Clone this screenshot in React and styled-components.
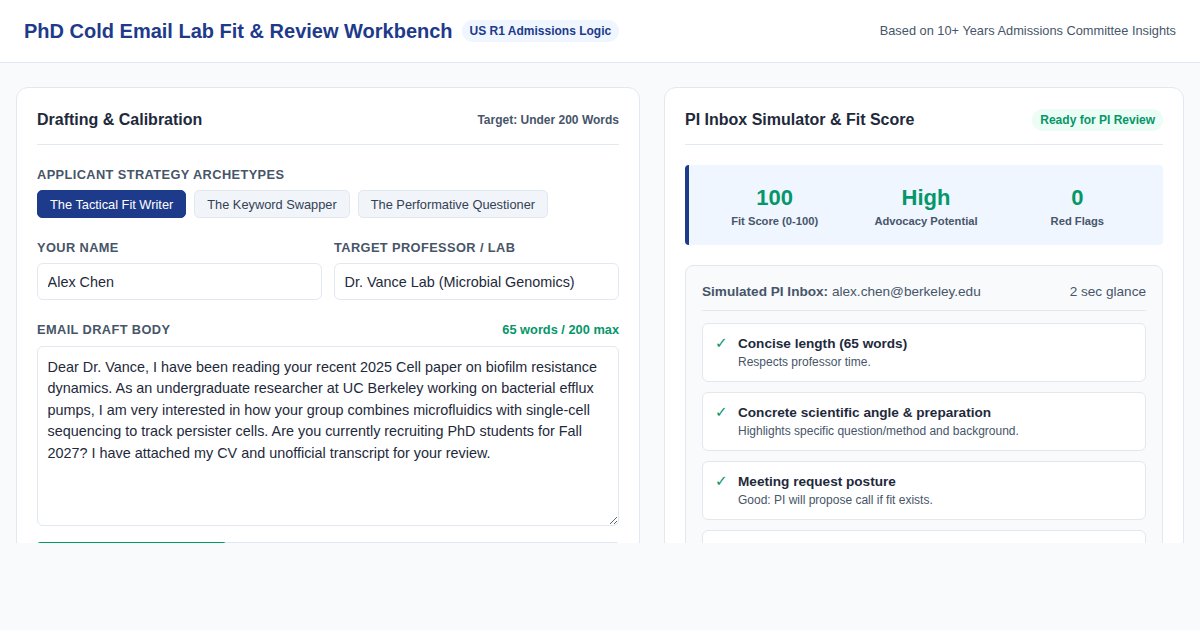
import React from "react";
import styled, { createGlobalStyle } from "styled-components";

const Global = createGlobalStyle`
  * { box-sizing: border-box; }
  html, body { margin: 0; padding: 0; }
  body {
    background: #f8fafc;
    font-family: "Liberation Sans", Arial, sans-serif;
    color: #1e293b;
    line-height: 1.5;
  }
`;

const Header = styled.header`
  height: 63px;
  background: #ffffff;
  border-bottom: 1px solid #e2e8f0;
  padding: 0 24px;
  display: flex;
  align-items: center;
  justify-content: space-between;
`;

const Brand = styled.div`
  display: flex;
  align-items: center;
  gap: 9px;
`;

const Title = styled.h1`
  margin: 0;
  font-size: 20px;
  font-weight: 700;
  color: #1e3a8a;
`;

const Pill = styled.span`
  display: inline-flex;
  align-items: center;
  height: 22px;
  padding: 0 ${(p) => p.$px || 8}px;
  border-radius: 11px;
  font-size: 12px;
  font-weight: 700;
  background: ${(p) => (p.$tone === "green" ? "#ecfdf5" : "#eff6ff")};
  color: ${(p) => (p.$tone === "green" ? "#059669" : "#1e3a8a")};
`;

const Tagline = styled.div`
  font-size: 12.8px;
  color: #475569;
`;

const Main = styled.main`
  height: 480px;
  overflow: hidden;
  padding: 24px 16px;
  display: grid;
  grid-template-columns: 1.2fr 1fr;
  gap: 24px;
  align-items: start;
`;

const Panel = styled.section`
  background: #ffffff;
  border: 1px solid #e2e8f0;
  border-radius: 12px;
  padding: 20px;
`;

const PanelHead = styled.div`
  display: flex;
  align-items: center;
  justify-content: space-between;
  height: 37px;
  padding-bottom: 12px;
  border-bottom: 1px solid #e2e8f0;
  margin-bottom: 20px;
`;

const PanelTitle = styled.h2`
  margin: 0;
  font-size: 16px;
  font-weight: 700;
  color: #1e293b;
  line-height: 24px;
`;

const Meta = styled.span`
  font-size: 12px;
  font-weight: 700;
  color: #475569;
`;

const Section = styled.div`
  margin-bottom: 20px;
`;

const LabelRow = styled.div`
  display: flex;
  justify-content: space-between;
  align-items: center;
  margin-bottom: 6px;
  height: 19.2px;
`;

const Label = styled.label`
  display: block;
  font-size: 12.8px;
  font-weight: 700;
  letter-spacing: 0.4px;
  text-transform: uppercase;
  color: #475569;
  line-height: 19.2px;
`;

const Count = styled.span`
  font-size: 12.8px;
  font-weight: 700;
  color: #059669;
`;

const ButtonRow = styled.div`
  display: flex;
  gap: 8px;
`;

const ArchButton = styled.button`
  height: 28px;
  padding: 0 12px;
  border-radius: 5px;
  font-family: "Liberation Sans", Arial, sans-serif;
  font-size: 12.8px;
  cursor: pointer;
  border: 1px solid ${(p) => (p.$active ? "#1e3a8a" : "#e2e8f0")};
  background: ${(p) => (p.$active ? "#1e3a8a" : "#f1f5f9")};
  color: ${(p) => (p.$active ? "#ffffff" : "#334155")};
`;

const Grid2 = styled.div`
  display: grid;
  grid-template-columns: 1fr 1fr;
  gap: 12px;
  margin-bottom: 20px;
`;

const Input = styled.input`
  width: 100%;
  height: 37px;
  padding: 0 9.6px;
  border: 1px solid #e2e8f0;
  border-radius: 6px;
  font-family: "Liberation Sans", Arial, sans-serif;
  font-size: 14.4px;
  color: #1e293b;
  background: #ffffff;
  outline: none;
`;

const TextArea = styled.textarea`
  display: block;
  width: 100%;
  height: 180px;
  padding: 10px 9.6px 8px;
  border: 1px solid #e2e8f0;
  border-radius: 6px;
  font-family: "Liberation Sans", Arial, sans-serif;
  font-size: 14.4px;
  line-height: 1.5;
  color: #1e293b;
  background: #ffffff;
  outline: none;
`;

const Track = styled.div`
  margin-top: 16px;
  height: 6px;
  border-radius: 3px;
  background: #e2e8f0;
  overflow: hidden;
`;

const Fill = styled.div`
  height: 100%;
  background: #059669;
  border-radius: 3px;
`;

const ScoreBox = styled.div`
  display: grid;
  grid-template-columns: repeat(3, 1fr);
  gap: 12px;
  padding: 21px 16px 17px;
  background: #eff6ff;
  border-left: 4px solid #1e3a8a;
  border-radius: 4px;
  margin-bottom: 20px;
`;

const Stat = styled.div`
  text-align: center;
`;

const StatValue = styled.div`
  font-size: 22px;
  font-weight: 700;
  color: #059669;
  line-height: 24px;
`;

const StatLabel = styled.div`
  margin-top: 4px;
  font-size: 11.2px;
  font-weight: 700;
  color: #475569;
  line-height: 14px;
`;

const Inbox = styled.div`
  background: #f8fafc;
  border: 1px solid #e2e8f0;
  border-radius: 8px;
  padding: 16px;
`;

const InboxHead = styled.div`
  display: flex;
  justify-content: space-between;
  align-items: center;
  font-size: 13.6px;
  line-height: 19.5px;
  color: #475569;
  padding-bottom: 8px;
  border-bottom: 1px solid #e2e8f0;
  margin-bottom: 12px;
`;

const List = styled.div`
  display: flex;
  flex-direction: column;
  gap: 10px;
`;

const Item = styled.div`
  display: flex;
  gap: 10px;
  align-items: flex-start;
  background: #ffffff;
  border: 1px solid #e2e8f0;
  border-radius: 6px;
  padding: 12px;
`;

const Check = styled.span`
  font-family: "DejaVu Sans", sans-serif;
  font-size: 15px;
  line-height: 14px;
  width: 13px;
  color: #059669;
`;

const ItemTitle = styled.div`
  font-size: 13.6px;
  font-weight: 700;
  color: #1e293b;
  line-height: 15px;
`;

const ItemDesc = styled.div`
  margin-top: 5px;
  font-size: 12px;
  color: #475569;
  line-height: 13px;
`;

const draft =
  "Dear Dr. Vance, I have been reading your recent 2025 Cell paper on biofilm resistance dynamics. As an undergraduate researcher at UC Berkeley working on bacterial efflux pumps, I am very interested in how your group combines microfluidics with single-cell sequencing to track persister cells. Are you currently recruiting PhD students for Fall 2027? I have attached my CV and unofficial transcript for your review.";

const checks = [
  ["Concise length (65 words)", "Respects professor time."],
  ["Concrete scientific angle & preparation", "Highlights specific question/method and background."],
  ["Meeting request posture", "Good: PI will propose call if fit exists."],
  ["Attachments referenced", "CV and transcript mentioned for quick screening."],
];

export default function App() {
  const words = 65;
  const max = 200;
  return (
    <>
      <Global />
      <Header>
        <Brand>
          <Title>PhD Cold Email Lab Fit &amp; Review Workbench</Title>
          <Pill>US R1 Admissions Logic</Pill>
        </Brand>
        <Tagline>Based on 10+ Years Admissions Committee Insights</Tagline>
      </Header>
      <Main>
        <Panel>
          <PanelHead>
            <PanelTitle>Drafting &amp; Calibration</PanelTitle>
            <Meta>Target: Under 200 Words</Meta>
          </PanelHead>
          <Section>
            <LabelRow>
              <Label>Applicant Strategy Archetypes</Label>
            </LabelRow>
            <ButtonRow>
              <ArchButton $active>The Tactical Fit Writer</ArchButton>
              <ArchButton>The Keyword Swapper</ArchButton>
              <ArchButton>The Performative Questioner</ArchButton>
            </ButtonRow>
          </Section>
          <Grid2>
            <div>
              <LabelRow>
                <Label>Your Name</Label>
              </LabelRow>
              <Input defaultValue="Alex Chen" />
            </div>
            <div>
              <LabelRow>
                <Label>Target Professor / Lab</Label>
              </LabelRow>
              <Input defaultValue="Dr. Vance Lab (Microbial Genomics)" />
            </div>
          </Grid2>
          <div>
            <LabelRow>
              <Label>Email Draft Body</Label>
              <Count>
                {words} words / {max} max
              </Count>
            </LabelRow>
            <TextArea defaultValue={draft} />
            <Track>
              <Fill style={{ width: `${(words / max) * 100}%` }} />
            </Track>
          </div>
        </Panel>
        <Panel>
          <PanelHead>
            <PanelTitle>PI Inbox Simulator &amp; Fit Score</PanelTitle>
            <Pill $tone="green" $px={8}>Ready for PI Review</Pill>
          </PanelHead>
          <ScoreBox>
            <Stat>
              <StatValue>100</StatValue>
              <StatLabel>Fit Score (0-100)</StatLabel>
            </Stat>
            <Stat>
              <StatValue>High</StatValue>
              <StatLabel>Advocacy Potential</StatLabel>
            </Stat>
            <Stat>
              <StatValue>0</StatValue>
              <StatLabel>Red Flags</StatLabel>
            </Stat>
          </ScoreBox>
          <Inbox>
            <InboxHead>
              <span>
                <b>Simulated PI Inbox:</b> alex.chen@berkeley.edu
              </span>
              <span>2 sec glance</span>
            </InboxHead>
            <List>
              {checks.map(([t, d]) => (
                <Item key={t}>
                  <Check>✓</Check>
                  <div>
                    <ItemTitle>{t}</ItemTitle>
                    <ItemDesc>{d}</ItemDesc>
                  </div>
                </Item>
              ))}
            </List>
          </Inbox>
        </Panel>
      </Main>
    </>
  );
}
